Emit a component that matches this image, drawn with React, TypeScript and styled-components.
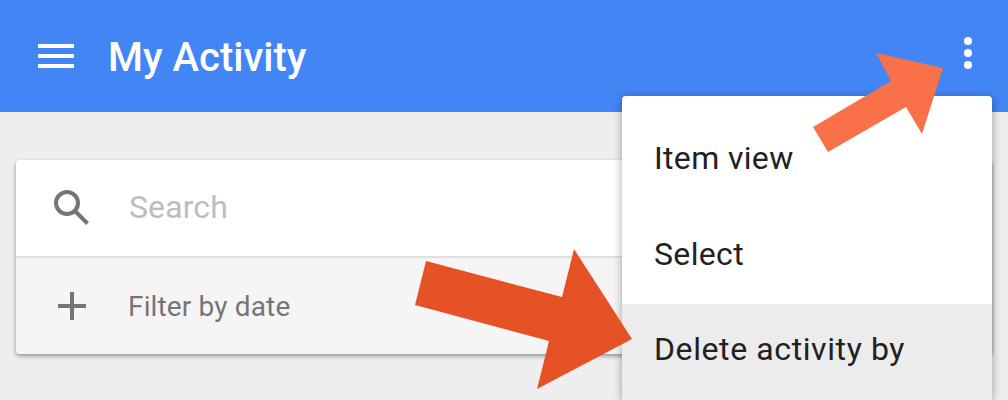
import styled, { createGlobalStyle } from 'styled-components';

const GlobalStyle = createGlobalStyle`
  html, body {
    margin: 0;
    padding: 0;
    height: 400px;
    overflow: hidden;
    background: #eeeeee;
    font-family: Roboto, 'Liberation Sans', sans-serif;
  }
`;

const Page = styled.div`
  position: relative;
  width: 1008px;
  height: 400px;
  overflow: hidden;
`;

const Header = styled.header`
  height: 112px;
  background: #4285f4;
  display: flex;
  align-items: center;
  padding: 0 24px 0 38px;
  box-sizing: border-box;
`;

const MenuButton = styled.div`
  width: 36px;
  height: 24px;
  display: flex;
  flex-direction: column;
  justify-content: space-between;
  margin-right: 35px;
`;

const Bar = styled.span`
  display: block;
  height: 4px;
  background: #ffffff;
`;

const Title = styled.h1`
  margin: 4px 0 0 -1px;
  flex: 1;
  font-size: 40px;
  font-weight: 500;
  line-height: 48px;
  color: #ffffff;
`;

const MoreButton = styled.div`
  width: 16px;
  display: flex;
  flex-direction: column;
  align-items: center;
  gap: 4px;
  margin-right: 8px;
  margin-top: -6px;
`;

const Dot = styled.span`
  width: 8px;
  height: 8px;
  border-radius: 50%;
  background: #ffffff;
`;

const Content = styled.main`
  padding: 48px 16px 0;
`;

const Card = styled.section`
  height: 194px;
  border-radius: 4px;
  overflow: hidden;
  box-shadow: 0 2px 4px rgba(0, 0, 0, 0.4);
  display: flex;
  flex-direction: column;
`;

const SearchRow = styled.div`
  height: 96px;
  background: #ffffff;
  border-bottom: 2px solid #e0e0e0;
  display: flex;
  align-items: center;
  padding-left: 36px;
`;

const FilterRow = styled.div`
  flex: 1;
  background: #f5f5f5;
  display: flex;
  align-items: center;
  padding-left: 36px;
`;

const IconSlot = styled.div`
  width: 40px;
  height: 40px;
  margin-right: 36px;
  display: flex;
  align-items: center;
  justify-content: center;
`;

const SearchText = styled.span`
  font-size: 32px;
  letter-spacing: 0.1px;
  margin: -2px 0 0 1px;
  color: #bdbdbd;
`;

const FilterText = styled.span`
  font-size: 28px;
  letter-spacing: 0.15px;
  color: #757575;
`;

const Menu = styled.nav`
  position: absolute;
  left: 622px;
  top: 96px;
  width: 370px;
  background: #ffffff;
  border-radius: 4px 4px 0 0;
  box-shadow: 0 2px 10px rgba(0, 0, 0, 0.35);
  padding-top: 16px;
`;

const MenuItem = styled.div<{ $active?: boolean }>`
  height: 96px;
  box-sizing: border-box;
  display: flex;
  align-items: center;
  padding: 0 0 ${(p) => (p.$active ? 6 : 4)}px 32px;
  font-size: 32px;
  letter-spacing: ${(p) => (p.$active ? 0.6 : 0.35)}px;
  color: #212121;
  background: ${(p) => (p.$active ? '#ececec' : 'transparent')};
`;

const ArrowLayer = styled.svg`
  position: absolute;
  left: 0;
  top: 0;
  pointer-events: none;
`;

export default function App() {
  return (
    <Page>
      <GlobalStyle />
      <Header>
        <MenuButton>
          <Bar />
          <Bar />
          <Bar />
        </MenuButton>
        <Title>My Activity</Title>
        <MoreButton>
          <Dot />
          <Dot />
          <Dot />
        </MoreButton>
      </Header>
      <Content>
        <Card>
          <SearchRow>
            <IconSlot>
              <svg width="40" height="40" viewBox="0 0 40 40" fill="none" stroke="#757575" strokeWidth="4">
                <circle cx="15" cy="15" r="11" />
                <line x1="23" y1="23" x2="35.5" y2="35.5" />
              </svg>
            </IconSlot>
            <SearchText>Search</SearchText>
          </SearchRow>
          <FilterRow>
            <IconSlot>
              <svg width="40" height="40" viewBox="0 0 40 40" fill="#757575">
                <rect x="6" y="18" width="28" height="4" />
                <rect x="18" y="6" width="4" height="28" />
              </svg>
            </IconSlot>
            <FilterText>Filter by date</FilterText>
          </FilterRow>
        </Card>
      </Content>
      <Menu>
        <MenuItem>Item view</MenuItem>
        <MenuItem>Select</MenuItem>
        <MenuItem $active>Delete activity by</MenuItem>
      </Menu>
      <ArrowLayer width="1008" height="400" viewBox="0 0 1008 400">
        <polygon fill="#fa7049" points="813,127 891,81 876,53 943,68 922,134 906,107 828,152" />
        <polygon fill="#e55225" points="426,261 562,297 574,249 632,339 537,389 549,341 415,305" />
      </ArrowLayer>
    </Page>
  );
}
